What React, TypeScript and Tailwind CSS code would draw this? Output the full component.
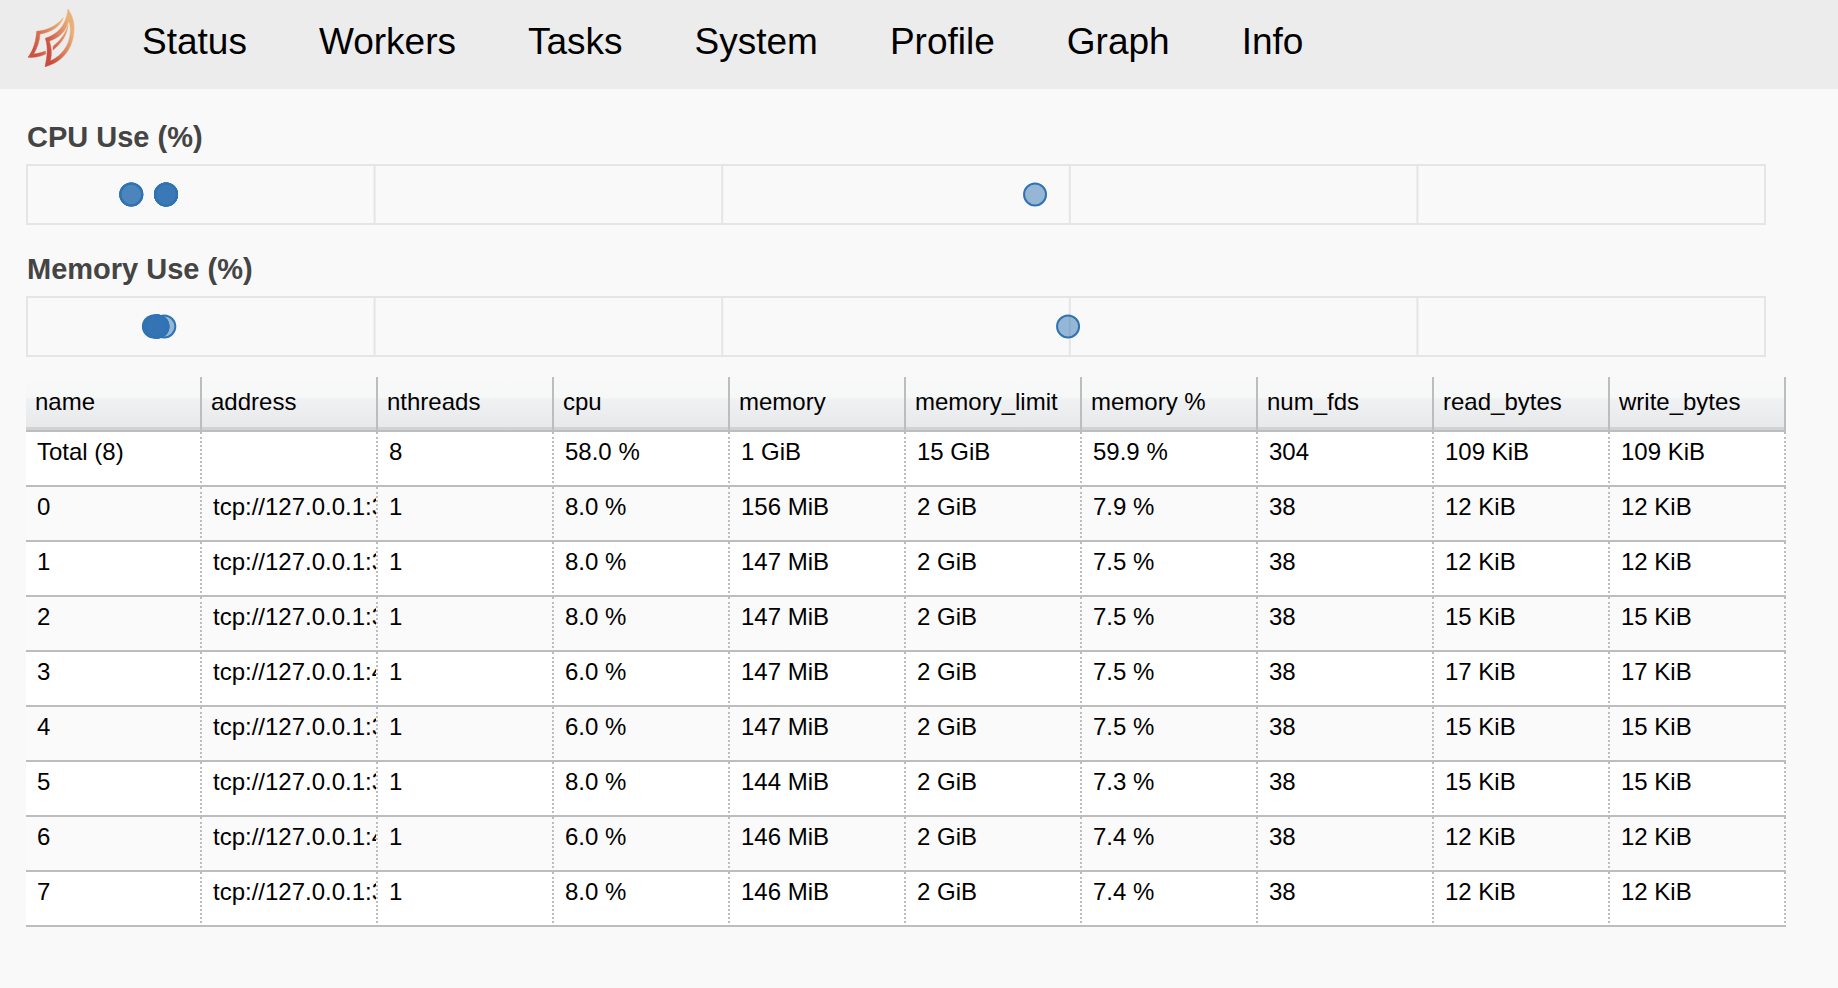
import React from "react";

const NAV_ITEMS = ["Status", "Workers", "Tasks", "System", "Profile", "Graph", "Info"];

const COLUMNS = [
  "name",
  "address",
  "nthreads",
  "cpu",
  "memory",
  "memory_limit",
  "memory %",
  "num_fds",
  "read_bytes",
  "write_bytes",
];

const ROWS = [
  ["Total (8)", "", "8", "58.0 %", "1 GiB", "15 GiB", "59.9 %", "304", "109 KiB", "109 KiB"],
  ["0", "tcp://127.0.0.1:3", "1", "8.0 %", "156 MiB", "2 GiB", "7.9 %", "38", "12 KiB", "12 KiB"],
  ["1", "tcp://127.0.0.1:3", "1", "8.0 %", "147 MiB", "2 GiB", "7.5 %", "38", "12 KiB", "12 KiB"],
  ["2", "tcp://127.0.0.1:3", "1", "8.0 %", "147 MiB", "2 GiB", "7.5 %", "38", "15 KiB", "15 KiB"],
  ["3", "tcp://127.0.0.1:4", "1", "6.0 %", "147 MiB", "2 GiB", "7.5 %", "38", "17 KiB", "17 KiB"],
  ["4", "tcp://127.0.0.1:3", "1", "6.0 %", "147 MiB", "2 GiB", "7.5 %", "38", "15 KiB", "15 KiB"],
  ["5", "tcp://127.0.0.1:3", "1", "8.0 %", "144 MiB", "2 GiB", "7.3 %", "38", "15 KiB", "15 KiB"],
  ["6", "tcp://127.0.0.1:4", "1", "6.0 %", "146 MiB", "2 GiB", "7.4 %", "38", "12 KiB", "12 KiB"],
  ["7", "tcp://127.0.0.1:3", "1", "8.0 %", "146 MiB", "2 GiB", "7.4 %", "38", "12 KiB", "12 KiB"],
];

const CPU_COLUMN = 3;
const MEMORY_COLUMN = 6;

function Logo() {
  return (
    <svg viewBox="78 21 150 186" className="h-[62px] w-[50px]" aria-hidden="true">
      <defs>
        <linearGradient id="front" gradientUnits="userSpaceOnUse" x1="138" y1="135" x2="220" y2="108">
          <stop offset="0" stopColor="#cb4b3d" />
          <stop offset="1" stopColor="#e9b078" />
        </linearGradient>
        <linearGradient id="back" gradientUnits="userSpaceOnUse" x1="95" y1="135" x2="195" y2="85">
          <stop offset="0" stopColor="#cc533f" />
          <stop offset="1" stopColor="#ebb276" />
        </linearGradient>
      </defs>
      <g fillRule="evenodd" strokeWidth="1.5" strokeLinejoin="round">
        <path
          fill="url(#front)"
          stroke="url(#front)"
          d="M204 27C216 46 224 66 222 92C219 146 188 186 135 200C142 168 145 142 136 115C171 103 198 80 204 27ZM206 64C199 92 180 113 148 123C155 143 156 162 151 183C187 166 209 136 211 96C212 84 210 73 206 64Z"
        />
        <path
          fill="url(#front)"
          stroke="url(#front)"
          d="M204 77C201 104 186 128 159 150L160 138C181 121 195 103 204 77Z"
        />
        <path
          fill="url(#back)"
          stroke="url(#back)"
          d="M190 53C181 80 152 97 120 102C119 124 112 143 101 162C114 161 126 157 136 153L137 162C121 170 102 173 84 172C101 149 108 123 110 94C143 91 170 77 190 53Z"
        />
      </g>
    </svg>
  );
}

function UsageChart({ title, values }: { title: string; values: number[] }) {
  return (
    <section className="mr-5">
      <h2 className="pl-px text-[29px] leading-[34px] font-bold text-[#444444]">{title}</h2>
      <div className="mt-[10px] p-px">
        <svg className="block h-[59px] w-full overflow-visible" role="img" aria-label={title}>
          <rect width="100%" height="100%" fill="none" stroke="#e5e5e5" strokeWidth="2" />
          {["20%", "40%", "60%", "80%"].map((x) => (
            <line key={x} x1={x} x2={x} y1="0" y2="100%" stroke="#e5e5e5" strokeWidth="2" />
          ))}
          {values.map((value, i) => (
            <circle
              key={i}
              cx={`${value}%`}
              cy="50%"
              r="11"
              fill="#3373b3"
              fillOpacity="0.5"
              stroke="#3073b2"
              strokeWidth="2"
            />
          ))}
        </svg>
      </div>
    </section>
  );
}

function WorkerTable() {
  return (
    <table className="w-full table-fixed border-separate border-spacing-0 text-left text-2xl leading-7 text-black">
      <thead>
        <tr>
          {COLUMNS.map((column) => (
            <th
              key={column}
              scope="col"
              className="h-[55px] overflow-hidden border-r-2 border-b-2 border-[#bdbdbd] bg-[linear-gradient(#f9f9f9_0%,#f6f7f7_40%,#f0f1f2_41%,#e8e9eb_94%,#d1d2d3_95%,#d1d2d3_100%)] pt-[11px] pl-[9px] align-top font-normal whitespace-nowrap"
            >
              {column}
            </th>
          ))}
        </tr>
      </thead>
      <tbody>
        {ROWS.map((row) => (
          <tr key={row[0]} className="odd:bg-white even:bg-[#fafafa]">
            {row.map((cell, i) => (
              <td
                key={COLUMNS[i]}
                className="h-[55px] overflow-hidden border-r-2 border-b-2 border-[#bdbdbd] [border-right-style:dotted] pt-[6px] pl-[11px] align-top whitespace-nowrap"
              >
                {cell}
              </td>
            ))}
          </tr>
        ))}
      </tbody>
    </table>
  );
}

export default function App() {
  const cpu = ROWS.map((row) => parseFloat(row[CPU_COLUMN]));
  const memory = ROWS.map((row) => parseFloat(row[MEMORY_COLUMN]));

  return (
    <div className="min-h-screen bg-[#f9f9f9] font-['Liberation_Sans',Arial,sans-serif]">
      <header className="flex h-[89px] items-start bg-[#ececec] pt-[7px] pl-[26px]">
        <a href="#home" aria-label="Home">
          <Logo />
        </a>
        <nav className="ml-[66px] flex gap-[72px] pt-[14px] text-[37px] leading-[42px] text-black">
          {NAV_ITEMS.map((item) => (
            <a key={item} href={`#${item.toLowerCase()}`}>
              {item}
            </a>
          ))}
        </nav>
      </header>
      <main className="pt-[31px] pr-[52px] pb-[61px] pl-[26px]">
        <div className="mb-5 flex flex-col gap-[27px]">
          <UsageChart title="CPU Use (%)" values={cpu} />
          <UsageChart title="Memory Use (%)" values={memory} />
        </div>
        <WorkerTable />
      </main>
    </div>
  );
}
